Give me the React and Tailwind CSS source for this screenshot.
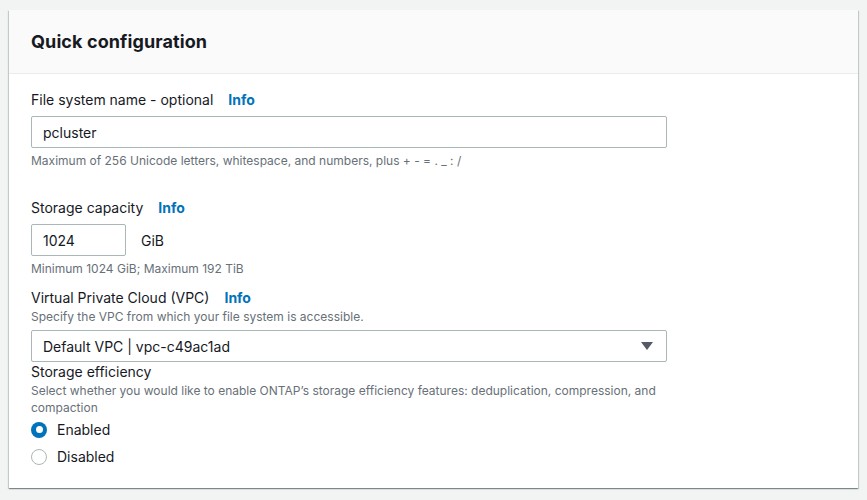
import { useState } from 'react';

const font = { fontFamily: 'Inter, "Open Sans", sans-serif' };

const Info = () => (
  <span className="ml-[15px] text-[14px] font-bold text-[#0073bb]">Info</span>
);

const Label = ({ children, info }) => (
  <div className="flex items-center text-[14px] leading-[20px] text-[#16191f]">
    <span>{children}</span>
    {info && <Info />}
  </div>
);

const Hint = ({ children, className = '' }) => (
  <p className={`text-[12px] leading-[17px] text-[#687078] ${className}`}>{children}</p>
);

const Radio = ({ checked, label, onClick }) => (
  <div className="flex items-center h-[27px] cursor-pointer" onClick={onClick}>
    {checked ? (
      <span className="w-[16px] h-[16px] rounded-full bg-[#0073bb] flex items-center justify-center">
        <span className="w-[7px] h-[7px] rounded-full bg-white" />
      </span>
    ) : (
      <span className="w-[16px] h-[16px] rounded-full border border-[#aab7b8] bg-white" />
    )}
    <span className="ml-[10px] text-[14px] text-[#16191f]">{label}</span>
  </div>
);

export default function App() {
  const [efficiency, setEfficiency] = useState('enabled');

  return (
    <div className="min-h-screen bg-[#f2f3f3] pt-[10px] px-[9px]" style={font}>
      <div className="bg-white shadow-[0_1px_1px_0_rgba(0,28,36,0.3),1px_1px_1px_0_rgba(0,28,36,0.15),-1px_1px_1px_0_rgba(0,28,36,0.15)]">
        <div className="bg-[#fafafa] border-b border-[#eaeded] h-[64px] flex items-center px-[22px]">
          <h2 className="text-[18px] font-bold text-[#16191f] tracking-[0.1px]">Quick configuration</h2>
        </div>

        <div className="px-[22px] pt-[16px] pb-[18px] w-[680px]">
          <Label info>File system name - optional</Label>
          <div className="mt-[6px] h-[32px] w-[636px] border border-[#aab7b8] rounded-[2px] flex items-center px-[11px] text-[14px] text-[#16191f]">
            pcluster
          </div>
          <Hint className="mt-[4px]">Maximum of 256 Unicode letters, whitespace, and numbers, plus + - = . _ : /</Hint>

          <div className="mt-[29px]">
            <Label info>Storage capacity</Label>
          </div>
          <div className="mt-[6px] flex items-center">
            <div className="h-[32px] w-[95px] border border-[#aab7b8] rounded-[2px] flex items-center px-[11px] text-[14px] text-[#16191f]">
              1024
            </div>
            <span className="ml-[15px] text-[14px] text-[#16191f]">GiB</span>
          </div>
          <Hint className="mt-[4px]">Minimum 1024 GiB; Maximum 192 TiB</Hint>

          <div className="mt-[11px]">
            <Label info>Virtual Private Cloud (VPC)</Label>
          </div>
          <Hint>Specify the VPC from which your file system is accessible.</Hint>
          <div className="mt-[5px] h-[32px] w-[636px] border border-[#aab7b8] rounded-[2px] flex items-center justify-between pl-[11px] pr-[13px] text-[14px] text-[#16191f]">
            <span>Default VPC | vpc-c49ac1ad</span>
            <svg width="12" height="8" viewBox="0 0 12 8">
              <path d="M0 0 L12 0 L6 8 Z" fill="#545b64" />
            </svg>
          </div>

          <Label>Storage efficiency</Label>
          <Hint className="w-[640px]">
            Select whether you would like to enable ONTAP’s storage efficiency features: deduplication, compression, and compaction
          </Hint>
          <div>
            <Radio checked={efficiency === 'enabled'} label="Enabled" onClick={() => setEfficiency('enabled')} />
            <Radio checked={efficiency === 'disabled'} label="Disabled" onClick={() => setEfficiency('disabled')} />
          </div>
        </div>
      </div>
    </div>
  );
}
